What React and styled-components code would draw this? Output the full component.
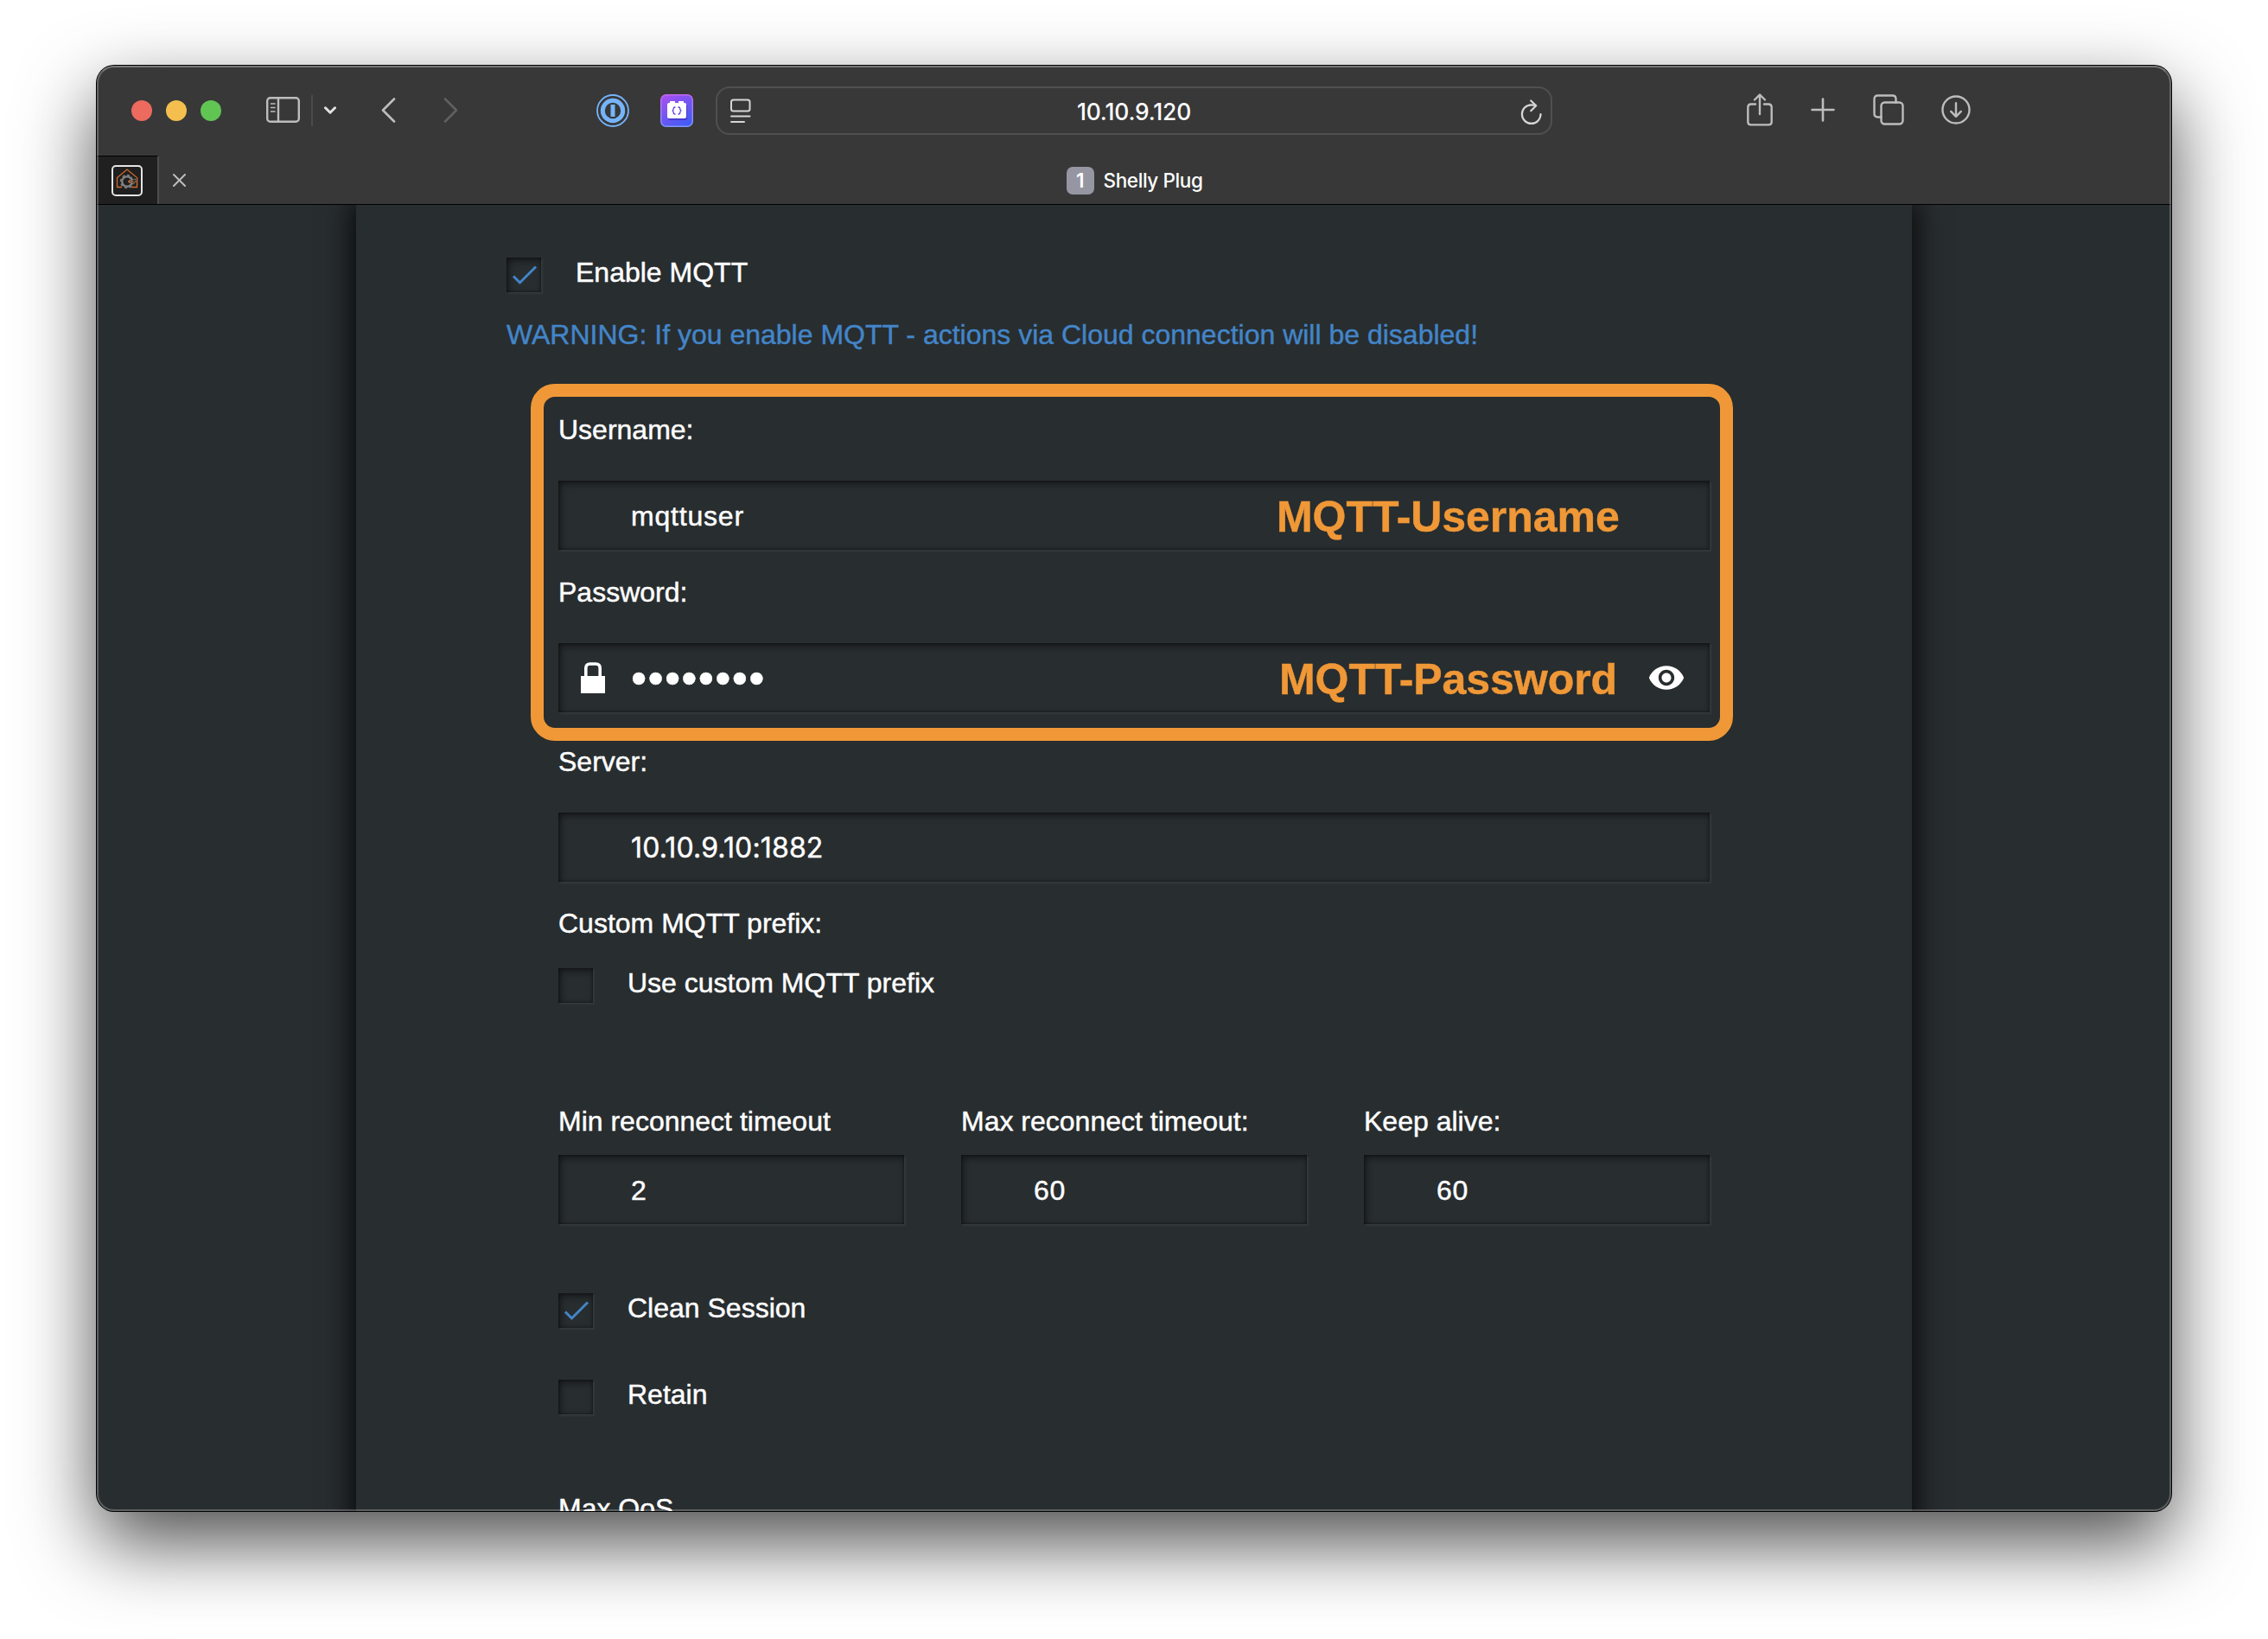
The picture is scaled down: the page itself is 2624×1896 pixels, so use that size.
import React from "react";
import styled, { createGlobalStyle } from "styled-components";
import { MdVisibility } from "react-icons/md";

const GlobalStyle = createGlobalStyle`
  *, *::before, *::after { box-sizing: border-box; }
  html, body { margin: 0; background: #ffffff; }
  body { overflow: hidden; }
`;

const pageFont = `"Liberation Sans", Arial, Helvetica, sans-serif`;
const systemFont = `Inter, "Liberation Sans", sans-serif`;

const Desktop = styled.main`
  width: 2624px;
  height: 1896px;
  padding: 76px 112px 148px;
  overflow: hidden;
  background: #ffffff;
`;

const Window = styled.section`
  position: relative;
  display: flex;
  flex-direction: column;
  width: 2400px;
  height: 1672px;
  border-radius: 20px;
  background: #282d2f;
  box-shadow: 0 0 0 1px #000000, 0 36px 88px rgba(0, 0, 0, 0.7);

  &::after {
    content: "";
    position: absolute;
    inset: 0;
    border: 2px solid rgba(255, 255, 255, 0.24);
    border-top-color: rgba(255, 255, 255, 0.32);
    border-radius: 20px;
    pointer-events: none;
  }
`;

const Chrome = styled.header`
  flex: none;
  height: 161px;
  border-bottom: 1px solid #000000;
  border-radius: 20px 20px 0 0;
  background: #383838;
  overflow: hidden;
`;

const Toolbar = styled.div`
  display: grid;
  grid-template-columns: 716px 968px 716px;
  align-items: center;
  height: 104px;
`;

const ToolGroup = styled.div`
  display: flex;
  align-items: center;
  height: 56px;
  padding-left: ${(p) => p.$inset}px;
  color: #bdbdbd;
`;

const Light = styled.span`
  width: 24px;
  height: 24px;
  margin-right: 16px;
  border-radius: 50%;
  background: ${(p) => p.$color};
`;

const Glyph = styled.svg`
  display: block;
  flex: none;
  margin-left: ${(p) => p.$gap || 0}px;
  margin-bottom: ${(p) => p.$lift || 0}px;
  fill: none;
  stroke: ${(p) => p.$tint || "currentColor"};
  stroke-width: ${(p) => p.$weight || 3};
  stroke-linecap: round;
  stroke-linejoin: round;
`;

const Divider = styled.i`
  width: 2px;
  height: 36px;
  margin-left: 13px;
  background: #4b4b4b;
`;

const AddressBar = styled.div`
  display: grid;
  grid-template-columns: 60px 1fr 60px;
  align-items: center;
  height: 56px;
  border: 2px solid #505050;
  border-radius: 16px;
  color: #d6d6d6;
`;

const Address = styled.span`
  padding-top: 1px;
  text-align: center;
  font: 500 26.4px/52px ${systemFont};
  letter-spacing: -0.15px;
  color: #ffffff;
`;

const TabStrip = styled.div`
  display: grid;
  grid-template-columns: 72px 36px 1fr 108px;
  align-items: center;
  height: 56px;
`;

const PinnedTab = styled.div`
  display: flex;
  align-items: center;
  height: 56px;
  padding-left: 17px;
  border-top: 1px solid #000000;
  border-right: 2px solid #4d4d4d;
  background: #202020;
`;

const TabTitle = styled.div`
  display: flex;
  align-items: center;
  justify-content: center;
  gap: 11px;
  padding: 2px 0 0 1px;
  font: 500 22.5px/32px ${systemFont};
  letter-spacing: -0.4px;
  color: #ffffff;
`;

const TabCount = styled.span`
  width: 32px;
  border-radius: 7px;
  background: #9696a3;
  text-align: center;
  font-weight: 600;
`;

const Viewport = styled.div`
  flex: 1;
  min-height: 0;
  display: flex;
  justify-content: center;
  overflow: hidden;
  border-radius: 0 0 20px 20px;
`;

const Panel = styled.div`
  position: relative;
  width: 1800px;
  height: 1700px;
  padding: 61px 234px 0 174px;
  background: #282d2f;
  box-shadow: 0 0 30px 6px rgba(0, 0, 0, 0.75);
  font: 32px/40px ${pageFont};
  -webkit-text-stroke: 0.45px currentColor;
  color: #ffffff;
`;

const CheckRow = styled.label`
  display: flex;
  gap: 40px;
  height: 40px;
  margin-top: ${(p) => p.$gap || 0}px;
  line-height: 34px;
`;

const sunken = `
  box-shadow: inset 2px 3px 8px rgba(0, 0, 0, 0.55), inset 0 0 3px rgba(0, 0, 0, 0.45),
    2px 2px 2px rgba(255, 255, 255, 0.06);
`;

const Box = styled.span`
  flex: none;
  width: 40px;
  height: 40px;
  ${sunken}
`;

const Warning = styled.p`
  margin: 29px 0 70px;
  color: #4385c8;
  white-space: nowrap;
`;

const Spaced = styled.span`
  letter-spacing: ${(p) => p.$track || 0}px;
  white-space: nowrap;
`;

const Form = styled.div`
  margin-left: 60px;
`;

const Field = styled.div`
  display: flex;
  flex-direction: column;
  gap: ${(p) => (p.$compact ? 19 : 39)}px;
  margin-top: ${(p) => p.$gap || 0}px;
`;

const Input = styled.div`
  display: flex;
  align-items: center;
  height: 80px;
  padding: 2px 30px 0 84px;
  line-height: 78px;
  font-family: ${(p) => (p.$system ? systemFont : pageFont)};
  ${sunken}
`;

const SecretInput = styled(Input)`
  padding: 0 28px 0 26px;
`;

const Dots = styled.span`
  flex: 1;
  margin-left: 30px;
  font-size: 52px;
  letter-spacing: 1.25px;
`;

const Columns = styled.div`
  display: grid;
  grid-template-columns: repeat(3, 1fr);
  gap: 66px;
  margin-top: 117px;
`;

const Highlight = styled.div`
  position: absolute;
  left: 202px;
  top: 207px;
  width: 1391px;
  height: 413px;
  border: 15px solid #f09837;
  border-radius: 28px;
`;

const Callout = styled.strong`
  position: absolute;
  left: ${(p) => p.$x}px;
  top: ${(p) => p.$y}px;
  font: bold 50px/60px ${pageFont};
  letter-spacing: -0.05px;
  color: #f09837;
`;

const Check = ({ checked, gap, children }) => (
  <CheckRow $gap={gap}>
    <Box>
      {checked && (
        <Glyph width="40" height="40" viewBox="0 0 40 40" $tint="#4385c8" $weight={3}>
          <path d="M8 21.5l7.500 7.500L34 10.500" strokeLinecap="butt" strokeLinejoin="miter" />
        </Glyph>
      )}
    </Box>
    <Spaced>{children}</Spaced>
  </CheckRow>
);

const TextField = ({ label, value, gap, compact, system, valueTrack }) => (
  <Field $gap={gap} $compact={compact}>
    <Spaced>{label}</Spaced>
    <Input $system={system}>
      <Spaced $track={valueTrack}>{value}</Spaced>
    </Input>
  </Field>
);

const Favicon = () => (
  <svg width="36" height="36" viewBox="0 0 36 36">
    <rect x="1" y="1" width="34" height="34" rx="4" fill="#1f1f1f" stroke="#e4e4e4" strokeWidth="2" />
    <path d="M12 25.500H6.500V14.500L18 5l11.500 9.500v11H23" fill="none" stroke="#d06a2c" strokeWidth="1.300" />
    <circle cx="18" cy="19" r="5.800" fill="none" stroke="#808080" strokeWidth="2.400" />
    <circle cx="18" cy="19" r="7.400" fill="none" stroke="#808080" strokeWidth="1.600" strokeDasharray="3 2.800" />
    <path d="M24 13.500l6 1v7l-6 1z" fill="#1f1f1f" />
    <path d="M29.500 14v9" stroke="#d06a2c" strokeWidth="1.300" />
    <path d="M19 19h3M21 17v4M24 19h1.500M25.500 20.500h1.500" stroke="#d06a2c" strokeWidth="1.400" />
    <path d="M23.500 16.500h2M26.500 16.500h1.500M27 19h1.500M23.500 21.500h2" stroke="#8a8a8a" strokeWidth="1.500" />
  </svg>
);

const OnePassword = () => (
  <Glyph width="38" height="38" viewBox="0 0 38 38" $tint="#75b4fb" $gap={160}>
    <circle cx="19" cy="19" r="18" strokeWidth="1.800" />
    <circle cx="19" cy="19" r="11.700" strokeWidth="5" />
    <path d="M19 12v14" strokeWidth="5" strokeLinecap="butt" />
  </Glyph>
);

const BlocksIcon = () => (
  <Glyph width="38" height="38" viewBox="0 0 38 38" $gap={36}>
    <defs>
      <linearGradient id="blocks" x1="0.200" y1="0" x2="0.800" y2="1">
        <stop offset="0" stopColor="#a34ff2" />
        <stop offset="1" stopColor="#3f5cf5" />
      </linearGradient>
      <linearGradient id="rim" x1="0" y1="0" x2="0" y2="1">
        <stop offset="0" stopColor="#c268ee" />
        <stop offset="1" stopColor="#7f97fb" />
      </linearGradient>
    </defs>
    <rect x="0.750" y="0.750" width="36.500" height="36.500" rx="6" fill="url(#blocks)" stroke="url(#rim)" strokeWidth="1.500" />
    <rect x="9" y="12" width="22" height="18" rx="2" fill="#3a25b8" stroke="none" opacity="0.550" />
    <path d="M8 12q0-2 2-2h1V8h6v2h4V8h6v2h1q2 0 2 2v14q0 2-2 2H10q-2 0-2-2z" fill="#ffffff" stroke="none" />
    <path d="M17 15q-1.800 0-1.800 1.800T14 19q1.200.4 1.200 2.200T17 23M21 15q1.800 0 1.800 1.800T24 19q-1.200.4-1.200 2.200T21 23" stroke="#5b3be0" strokeWidth="1.300" />
  </Glyph>
);

const LockIcon = () => (
  <svg width="28" height="36" viewBox="0 0 28 36">
    <path d="M0 16h28v20H0z" fill="#ffffff" />
    <path d="M5.800 17V7q0-5 5-5h6.400q5 0 5 5v10" fill="none" stroke="#ffffff" strokeWidth="3.600" />
  </svg>
);

export default function App() {
  return (
    <Desktop>
      <GlobalStyle />
      <Window>
        <Chrome>
          <Toolbar>
            <ToolGroup $inset={40}>
              <Light $color="#ed6a5e" />
              <Light $color="#f5bf4f" />
              <Light $color="#61c554" />
              <Glyph width="39" height="30" viewBox="0 0 39 30" $gap={36} $lift={2} $weight={2.4}>
                <rect x="1.200" y="1.200" width="36.600" height="27.600" rx="3.500" />
                <path d="M14 1v28" />
                <path d="M5.500 8h4.500M5.500 12.500h4.500M5.500 17h4.500" strokeWidth="1.500" />
              </Glyph>
              <Divider />
              <Glyph width="14" height="9" viewBox="0 0 14 9" $gap={13} $lift={1} $weight={3} $tint="#e2e2e2">
                <path d="M1.500 1.800L7 7.200l5.500-5.400" />
              </Glyph>
              <Glyph width="17" height="29" viewBox="0 0 17 29" $gap={52} $lift={1} $weight={2.6}>
                <path d="M15 1.500L2 14.500l13 13" />
              </Glyph>
              <Glyph width="17" height="29" viewBox="0 0 17 29" $gap={55} $lift={1} $weight={2.6} $tint="#606060">
                <path d="M2 1.500l13 13L2 27.500" />
              </Glyph>
              <OnePassword />
              <BlocksIcon />
            </ToolGroup>
            <AddressBar>
              <Glyph width="24" height="29" viewBox="0 0 24 29" $gap={15} $weight={2}>
                <rect x="1" y="1.500" width="21.500" height="13" rx="2.500" />
                <path d="M1 20.500h21.500M1 27h15" />
              </Glyph>
              <Address>10.10.9.120</Address>
              <Glyph width="27" height="30" viewBox="0 0 27 30" $gap={24} $weight={2.2}>
                <path d="M18.500 8Q16.500 7.300 13.500 7.300A10.800 10.800 0 1 0 24.500 18" />
                <path d="M13.200 2.500l6 5.700-6 6" />
              </Glyph>
            </AddressBar>
            <ToolGroup $inset={225}>
              <Glyph width="30" height="38" viewBox="0 0 30 38" $lift={2} $weight={2.4}>
                <path d="M10 12.500H5q-3.700 0-3.700 3.700v16.500q0 3.700 3.700 3.700h20q3.700 0 3.700-3.700V16.200q0-3.700-3.700-3.700h-5" />
                <path d="M15 24V2M9 7.500l6-6 6 6" />
              </Glyph>
              <Glyph width="28" height="28" viewBox="0 0 28 28" $gap={44} $lift={3} $weight={2.6}>
                <path d="M14 1.500v25M1.500 14h25" />
              </Glyph>
              <Glyph width="36" height="36" viewBox="0 0 36 36" $gap={44} $lift={2} $weight={2.4}>
                <rect x="9.500" y="9.500" width="25" height="25" rx="4" />
                <path d="M9.500 26.500H5.500q-4 0-4-4v-17q0-4 4-4h17q4 0 4 4v4" />
              </Glyph>
              <Glyph width="34" height="34" viewBox="0 0 35 35" $gap={43} $lift={2} $weight={2.5}>
                <circle cx="17.500" cy="17.500" r="16" />
                <path d="M17.500 9.500v15.500M11.500 19.500l6 6 6-6" />
              </Glyph>
            </ToolGroup>
          </Toolbar>
          <TabStrip>
            <PinnedTab>
              <Favicon />
            </PinnedTab>
            <Glyph width="16" height="16" viewBox="0 0 16 16" $gap={16} $weight={2} $tint="#bdbdbd" style={undefined}>
              <path d="M1 2l13 13M14 2L1 15" />
            </Glyph>
            <TabTitle>
              <TabCount>1</TabCount>
              <span>Shelly Plug</span>
            </TabTitle>
          </TabStrip>
        </Chrome>
        <Viewport>
          <Panel>
            <Check checked>Enable MQTT</Check>
            <Warning>
              WARNING: If you enable MQTT - actions via Cloud connection will be disabled!
            </Warning>
            <Form>
              <TextField label="Username:" value="mqttuser" valueTrack={0.8} />
              <Field $gap={29}>
                <Spaced>Password:</Spaced>
                <SecretInput>
                  <LockIcon />
                  <Dots>••••••••</Dots>
                  <MdVisibility size={44} strokeWidth={0} />
                </SecretInput>
              </Field>
              <TextField label="Server:" value="10.10.9.10:1882" gap={37} system valueTrack={0.15} />
              <Field $gap={28}>
                <Spaced>Custom MQTT prefix:</Spaced>
              </Field>
              <Check gap={32}>Use custom MQTT prefix</Check>
              <Columns>
                <TextField compact label="Min reconnect timeout" value="2" />
                <TextField compact label="Max reconnect timeout:" value="60" valueTrack={0.6} />
                <TextField compact label="Keep alive:" value="60" valueTrack={0.6} />
              </Columns>
              <Check checked gap={80}>Clean Session</Check>
              <Check gap={60}>Retain</Check>
              <Field $gap={89}>
                <Spaced>Max QoS</Spaced>
              </Field>
            </Form>
            <Highlight />
            <Callout $x={1065} $y={331}>MQTT-Username</Callout>
            <Callout $x={1068} $y={519}>MQTT-Password</Callout>
          </Panel>
        </Viewport>
      </Window>
    </Desktop>
  );
}
